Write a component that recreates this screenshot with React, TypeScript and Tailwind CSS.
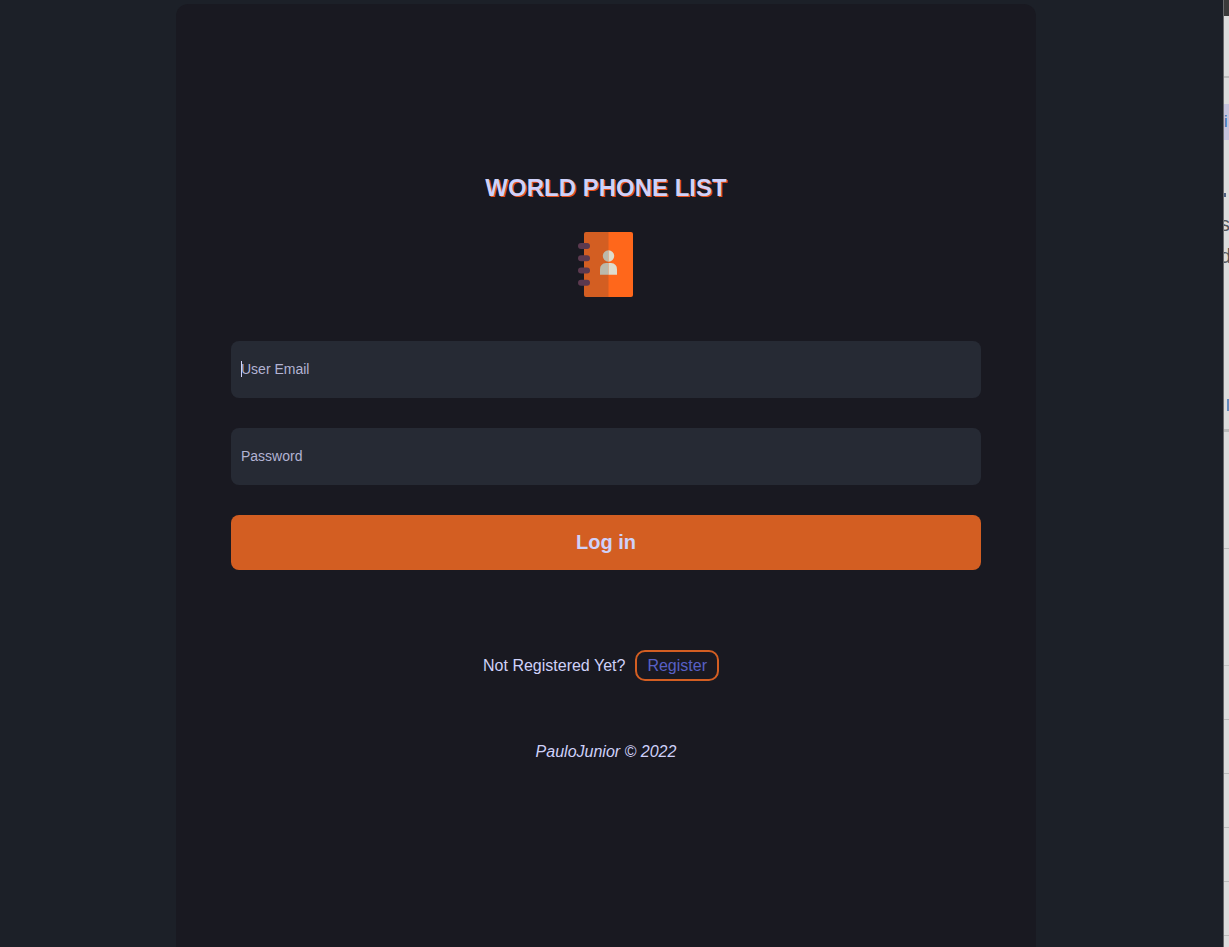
import type { InputHTMLAttributes } from 'react';

function AddressBook() {
  return (
    <svg viewBox="0 0 66 65" className="mt-7 h-[65px] w-[66px]" aria-hidden="true">
      <path d="M13 0H36V65H13Q11 65 11 63V2Q11 0 13 0Z" fill="#d35e22" />
      <path d="M35.5 0H58Q60 0 60 2V63Q60 65 58 65H35.5Z" fill="#ff671b" />
      {[14, 26.3, 38.5, 50.8].map((y) => (
        <rect key={y} x="5" y={y - 3} width="12" height="6" rx="3" fill="#5b394f" />
      ))}
      <path d="M35.5 18.3A5.7 5.7 0 0 0 35.5 29.7ZM35.5 31H33Q27 31.5 27 37.5V42.7H35.5Z" fill="#bbb9aa" />
      <path d="M35.5 18.3A5.7 5.7 0 0 1 35.5 29.7ZM35.5 31H38Q44 31.5 44 37.5V42.7H35.5Z" fill="#dedccd" />
    </svg>
  );
}

function Field({
  label,
  caret = false,
  ...props
}: InputHTMLAttributes<HTMLInputElement> & { label: string; caret?: boolean }) {
  return (
    <div className="relative">
      <input
        {...props}
        aria-label={label}
        placeholder={label}
        className="block h-[57px] w-full rounded-lg bg-[#262a34] px-2.5 pb-0.5 text-sm text-[#cfd1f9] caret-transparent outline-none placeholder:text-[#b2b3d3]"
      />
      {caret && <span className="absolute left-2.5 top-5 h-4 w-px bg-[#d0d2fa]" />}
    </div>
  );
}

function NeighbourWindow() {
  return (
    <aside
      aria-hidden="true"
      className="flex w-1.5 shrink-0 flex-col overflow-hidden border-l border-[#68696c] bg-[#dcdcdc] text-xl leading-8 text-[#55565a]"
    >
      <div className="h-4 shrink-0 bg-[#3b3b3b]" />
      <div className="h-[62px] shrink-0 border-b-2 border-[#bcbcbc]" />
      <div className="mt-[26px] h-9 shrink-0 bg-[#c5c3dc] text-base leading-9 text-[#356cab]">i</div>
      <div className="-ml-1 mt-9 h-8 shrink-0">
        <div className="ml-0.5 mt-[17px] size-1 bg-[#506080]" />
      </div>
      <div className="-ml-1 h-8 shrink-0">s</div>
      <div className="-ml-1 h-8 shrink-0">d</div>
      <div className="mt-[127px] h-3 w-0.5 shrink-0 self-end bg-[#648bbb]" />
      <div className="mt-[18px] h-[3px] shrink-0 bg-[#bcbcbc]" />
      <div className="mt-[116px] h-px shrink-0 bg-[#bcbcbc]" />
      <div className="mt-[116px] h-px shrink-0 bg-[#c4c4c4]" />
      {[0, 1, 2, 3, 4].map((n) => (
        <div key={n} className="mt-[53px] h-px shrink-0 bg-[#bcbcbc]" />
      ))}
    </aside>
  );
}

export default function App() {
  return (
    <div className="flex h-screen overflow-hidden bg-[#1c2028] font-['Liberation_Sans',Arial,sans-serif] text-[#cfd1f9]">
      <div className="flex min-w-0 flex-1 justify-center pr-[11px] pt-1">
        <main className="flex w-full max-w-[860px] flex-col items-center rounded-t-xl bg-[#191921] px-[55px] pt-[168px]">
          <h1 className="text-2xl font-bold [text-shadow:1px_1px_0_#e8501c]">WORLD PHONE LIST</h1>
          <AddressBook />
          <form className="mt-11 flex w-full flex-col gap-[30px]" onSubmit={(e) => e.preventDefault()}>
            <Field label="User Email" type="email" name="email" caret />
            <Field label="Password" type="password" name="password" />
            <button type="submit" className="h-[55px] rounded-lg bg-[#d35e22] pb-0.5 text-xl font-bold">
              Log in
            </button>
          </form>
          <p className="mt-20 flex items-center">
            Not Registered Yet?
            <a
              href="#register"
              className="mx-2.5 flex h-[31px] items-center rounded-[10px] border-2 border-[#d35e22] px-2.5 text-[#5860c5]"
            >
              Register
            </a>
          </p>
          <footer className="mt-[59px] italic">PauloJunior © 2022</footer>
        </main>
      </div>
      <NeighbourWindow />
    </div>
  );
}
